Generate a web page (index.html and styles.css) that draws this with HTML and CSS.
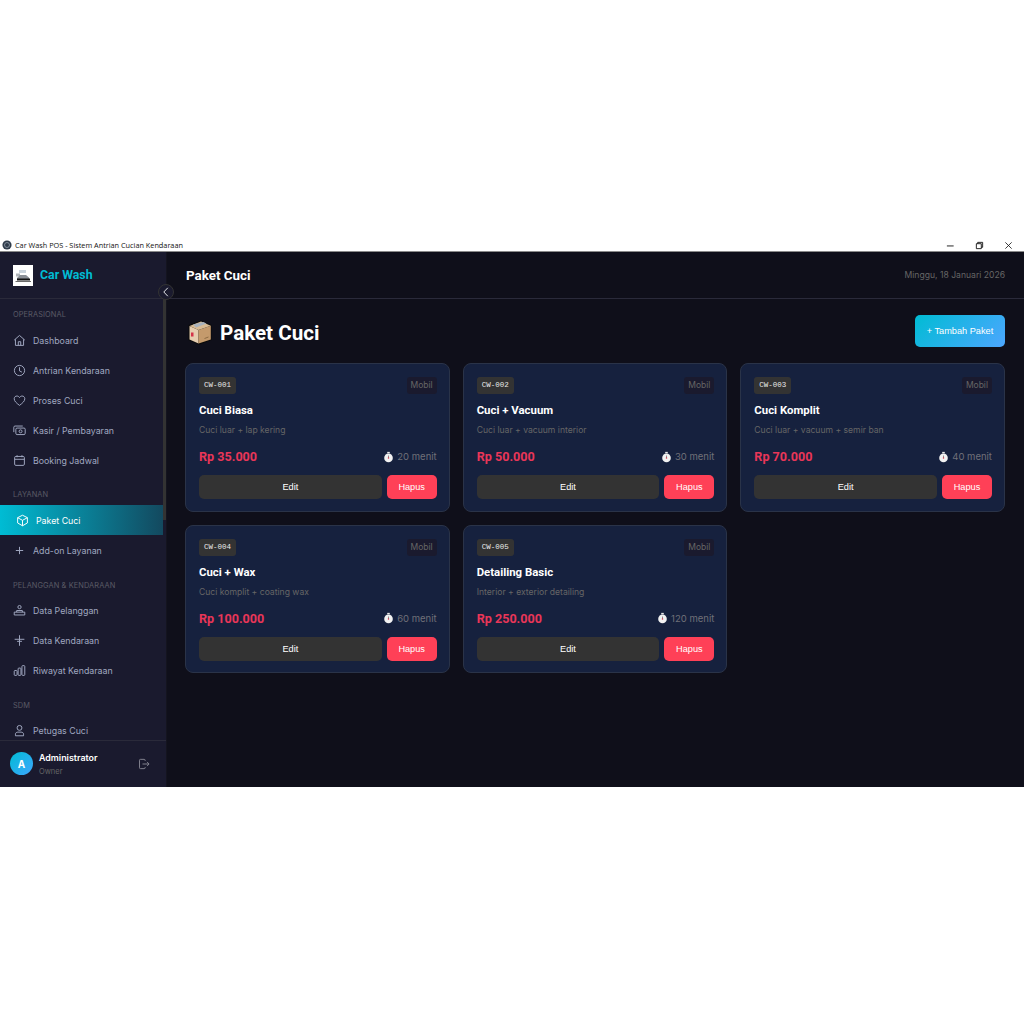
FILE: index.html
```html
<!DOCTYPE html>
<html lang="id">
<head>
  <meta charset="UTF-8">
  <title>Car Wash POS - Sistem Antrian Cucian Kendaraan</title>
  <link rel="stylesheet" href="styles.css">
</head>
<body>
  <svg class="sprites" width="0" height="0">
    <symbol id="i-box" viewBox="0 0 24 25">
      <path d="M0.5 5 L13 0.5 L23.5 5 L23.5 20 L11 24.8 L0.5 20 Z" fill="#0a0a0a"/>
      <path d="M1.5 6 L10.5 10 L10.5 23.5 L1.5 19.5 Z" fill="#e6cdb0"/>
      <path d="M10.5 10 L22.8 5.8 L22.8 19.5 L10.5 23.5 Z" fill="#c49a6c"/>
      <path d="M1.5 6 L13 1.5 L22.8 5.8 L10.5 10 Z" fill="#d8bb94"/>
      <path d="M5 4.6 L15.5 1.9 L18.5 3.6 L8 7.6 Z" fill="#a8b2bd"/>
      <rect x="3" y="12.5" width="2.5" height="4" fill="#d4334a"/>
      <path d="M16.5 18.5 L20.5 17" stroke="#8c6a43" stroke-width="1"/>
    </symbol>
    <symbol id="i-timer" viewBox="0 0 12 12">
      <circle cx="6" cy="7" r="4.7" fill="#f2f2f2"/>
      <rect x="4.6" y="0.4" width="2.8" height="1.6" fill="#e8e8e8"/>
      <path d="M6 7 L6 4.4" stroke="#666" stroke-width="0.8"/>
      <circle cx="6" cy="7" r="0.8" fill="#d4334a"/>
    </symbol>
  </svg>

  <div class="window">
    <div class="titlebar">
      <div class="titlebar-left">
        <svg class="app-icon" viewBox="0 0 12 12"><circle cx="6" cy="6" r="5.5" fill="#2f3b4a"/><circle cx="6" cy="6" r="3" fill="none" stroke="#8f9aa6" stroke-width="1"/></svg>
        <span>Car Wash POS - Sistem Antrian Cucian Kendaraan</span>
      </div>
      <div class="window-btns">
        <svg viewBox="0 0 10 10"><path d="M1 5.5H8.5" stroke="#111" stroke-width="1"/></svg>
        <svg viewBox="0 0 10 10"><path d="M1.5 3H7V8.5H1.5Z M3 3V1.5H8.5V7H7" fill="none" stroke="#111" stroke-width="1"/></svg>
        <svg viewBox="0 0 10 10"><path d="M1.5 1.5L8.5 8.5M8.5 1.5L1.5 8.5" stroke="#111" stroke-width="0.9"/></svg>
      </div>
    </div>

    <div class="app">
      <aside class="sidebar">
        <div class="brand">
          <div class="brand-logo">
            <svg viewBox="0 0 20 21"><rect x="6" y="5" width="7" height="3" fill="#c9d3dc"/><rect x="3" y="8.5" width="4" height="3" fill="#b0b5ba"/><path d="M4 13 L7 10 H13 L16 12.5 V14.5 H4 Z" fill="#8a8f96"/><rect x="4" y="13.5" width="13" height="2" fill="#111"/><path d="M2.5 16.5H18" stroke="#444" stroke-width="0.8"/></svg>
          </div>
          <span class="brand-name">Car Wash</span>
        </div>
        <button class="collapse-btn" type="button">
          <svg viewBox="0 0 10 10"><path d="M6.8 0.8L2.8 5L6.8 9.2" fill="none" stroke="#e4e6ea" stroke-width="1"/></svg>
        </button>

        <nav class="nav">
          <div class="nav-label">OPERASIONAL</div>
          <a class="nav-item"><svg viewBox="0 0 16 16"><path d="M1.5 7.5L8 1.8L14.5 7.5M3 6.5V14H13V6.5M6.5 14V9.5H9.5V14"/></svg>Dashboard</a>
          <a class="nav-item"><svg viewBox="0 0 16 16"><circle cx="8" cy="8" r="6.3"/><path d="M8 4V8.5L11 10"/></svg>Antrian Kendaraan</a>
          <a class="nav-item"><svg viewBox="0 0 16 16"><path d="M8 14C4 11 1.5 8.8 1.5 5.8C1.5 3.8 3 2.5 4.8 2.5C6.2 2.5 7.3 3.2 8 4.4C8.7 3.2 9.8 2.5 11.2 2.5C13 2.5 14.5 3.8 14.5 5.8C14.5 8.8 12 11 8 14Z"/></svg>Proses Cuci</a>
          <a class="nav-item"><svg viewBox="0 0 16 16"><rect x="3.5" y="5" width="11.5" height="8" rx="1.5"/><path d="M1 10V4C1 3 1.7 2.5 2.5 2.5H12"/><circle cx="9.3" cy="9" r="1.8"/></svg>Kasir / Pembayaran</a>
          <a class="nav-item"><svg viewBox="0 0 16 16"><rect x="2" y="3" width="12" height="11" rx="1.5"/><path d="M2 6.5H14M5 1.5V4M11 1.5V4"/></svg>Booking Jadwal</a>

          <div class="nav-label">LAYANAN</div>
          <a class="nav-item active"><svg viewBox="0 0 16 16"><path d="M8 1.5L14 4.5V11L8 14.5L2 11V4.5ZM2 4.5L8 7.8L14 4.5M8 7.8V14.5"/></svg>Paket Cuci</a>
          <a class="nav-item"><svg viewBox="0 0 16 16"><path d="M8 3.5V12.5M3.5 8H12.5"/></svg>Add-on Layanan</a>

          <div class="nav-label">PELANGGAN &amp; KENDARAAN</div>
          <a class="nav-item"><svg viewBox="0 0 16 16"><circle cx="8" cy="3.8" r="2"/><path d="M4.5 10V8H11.5V10M1.5 10H14.5V13.5H1.5Z"/></svg>Data Pelanggan</a>
          <a class="nav-item"><svg viewBox="0 0 16 16"><path d="M8 1.5V14.5M2 6.5H14M5 9H11"/></svg>Data Kendaraan</a>
          <a class="nav-item"><svg viewBox="0 0 16 16"><rect x="1.5" y="8" width="3.5" height="6" rx="1"/><rect x="6.3" y="5" width="3.5" height="9" rx="1"/><rect x="11" y="2" width="3.5" height="12" rx="1"/></svg>Riwayat Kendaraan</a>

          <div class="nav-label">SDM</div>
          <a class="nav-item"><svg viewBox="0 0 16 16"><circle cx="8" cy="4.8" r="3"/><path d="M3 14.5V12.5C3 10.8 4.5 10 6 10H10C11.5 10 13 10.8 13 12.5V14.5Z"/></svg>Petugas Cuci</a>
        </nav>
        <div class="scrollbar"></div>

        <div class="user">
          <div class="avatar">A</div>
          <div class="user-info">
            <div class="user-name">Administrator</div>
            <div class="user-role">Owner</div>
          </div>
          <svg class="logout" viewBox="0 0 16 16"><path d="M9.5 4V3C9.5 2.2 9 1.8 8.2 1.8H3.3C2.5 1.8 2 2.2 2 3V13C2 13.8 2.5 14.2 3.3 14.2H8.2C9 14.2 9.5 13.8 9.5 13V12M6 8H14.5M12 5.2L14.8 8L12 10.8"/></svg>
        </div>
      </aside>

      <div class="main">
        <header class="topbar">
          <span class="topbar-title">Paket Cuci</span>
          <span class="topbar-date">Minggu, 18 Januari 2026</span>
        </header>

        <section class="content">
          <div class="page-head">
            <h1 class="page-title"><svg class="box-icon"><use href="#i-box"/></svg>Paket Cuci</h1>
            <button class="btn-add" type="button">+ Tambah Paket</button>
          </div>

          <div class="card-grid">
            <div class="card">
              <div class="card-top"><span class="code">CW-001</span><span class="type">Mobil</span></div>
              <div class="card-name">Cuci Biasa</div>
              <div class="card-desc">Cuci luar + lap kering</div>
              <div class="card-meta"><span class="price">Rp 35.000</span><span class="duration"><svg><use href="#i-timer"/></svg>20 menit</span></div>
              <div class="card-actions"><button class="btn-edit" type="button">Edit</button><button class="btn-del" type="button">Hapus</button></div>
            </div>
            <div class="card">
              <div class="card-top"><span class="code">CW-002</span><span class="type">Mobil</span></div>
              <div class="card-name">Cuci + Vacuum</div>
              <div class="card-desc">Cuci luar + vacuum interior</div>
              <div class="card-meta"><span class="price">Rp 50.000</span><span class="duration"><svg><use href="#i-timer"/></svg>30 menit</span></div>
              <div class="card-actions"><button class="btn-edit" type="button">Edit</button><button class="btn-del" type="button">Hapus</button></div>
            </div>
            <div class="card">
              <div class="card-top"><span class="code">CW-003</span><span class="type">Mobil</span></div>
              <div class="card-name">Cuci Komplit</div>
              <div class="card-desc">Cuci luar + vacuum + semir ban</div>
              <div class="card-meta"><span class="price">Rp 70.000</span><span class="duration"><svg><use href="#i-timer"/></svg>40 menit</span></div>
              <div class="card-actions"><button class="btn-edit" type="button">Edit</button><button class="btn-del" type="button">Hapus</button></div>
            </div>
            <div class="card">
              <div class="card-top"><span class="code">CW-004</span><span class="type">Mobil</span></div>
              <div class="card-name">Cuci + Wax</div>
              <div class="card-desc">Cuci komplit + coating wax</div>
              <div class="card-meta"><span class="price">Rp 100.000</span><span class="duration"><svg><use href="#i-timer"/></svg>60 menit</span></div>
              <div class="card-actions"><button class="btn-edit" type="button">Edit</button><button class="btn-del" type="button">Hapus</button></div>
            </div>
            <div class="card">
              <div class="card-top"><span class="code">CW-005</span><span class="type">Mobil</span></div>
              <div class="card-name">Detailing Basic</div>
              <div class="card-desc">Interior + exterior detailing</div>
              <div class="card-meta"><span class="price">Rp 250.000</span><span class="duration"><svg><use href="#i-timer"/></svg>120 menit</span></div>
              <div class="card-actions"><button class="btn-edit" type="button">Edit</button><button class="btn-del" type="button">Hapus</button></div>
            </div>
          </div>
        </section>
      </div>
    </div>
  </div>
</body>
</html>
```

FILE: styles.css
```css
/* halaman: latar putih, jendela aplikasi di tengah */
html, body {
  margin: 0;
  height: 100%;
  background: #fff;
}

body {
  padding-top: 239px;
  box-sizing: border-box;
  font-family: "Inter", "Liberation Sans", sans-serif;
}

.sprites {
  display: block;
  height: 0;
}

.window {
  height: 548px;
  display: flex;
  flex-direction: column;
}

/* title bar */
.titlebar {
  height: 12px;
  display: flex;
  justify-content: space-between;
  align-items: center;
  background: #fff;
  border-bottom: 1px solid #8a8a8a;
  flex-shrink: 0;
}

.titlebar-left {
  display: flex;
  align-items: center;
  gap: 3px;
  padding-left: 2px;
  font-family: "Open Sans", sans-serif;
  font-size: 7.3px;
  color: #111;
}

.app-icon {
  width: 10px;
  height: 10px;
}

.window-btns {
  display: flex;
  gap: 20px;
  padding-right: 11px;
}

.window-btns svg {
  width: 9px;
  height: 9px;
}

.app {
  flex: 1;
  display: flex;
  min-height: 0;
  background: #0f0f1a;
}

/* sidebar */
.sidebar {
  width: 166px;
  flex-shrink: 0;
  background: #1a1a2e;
  border-right: 1px solid #14141f;
  display: flex;
  flex-direction: column;
  position: relative;
}

.brand {
  height: 46px;
  display: flex;
  align-items: center;
  gap: 7px;
  padding-left: 13px;
  border-bottom: 1px solid #2a2a3a;
  flex-shrink: 0;
}

.brand-logo {
  width: 20px;
  height: 21px;
  background: #fff;
  display: flex;
}

.brand-name {
  font-family: "Roboto", sans-serif;
  font-size: 12.3px;
  font-weight: 700;
  color: #00bcd4;
}

.collapse-btn {
  position: absolute;
  top: 32px;
  left: 158px;
  width: 16px;
  height: 16px;
  padding: 2px;
  box-sizing: border-box;
  border-radius: 50%;
  background: #1a1a2e;
  border: 1px solid #333;
  z-index: 2;
  display: flex;
}

.nav {
  flex: 1;
  min-height: 0;
  overflow: hidden;
  padding-top: 6px;
}

.nav-label {
  font-size: 7.4px;
  color: #5a5a66;
  padding: 5px 13px 0;
  height: 15px;
  letter-spacing: 0.1px;
}

.nav-item + .nav-label {
  margin-top: 10.3px;
}

.nav-item {
  height: 30px;
  display: flex;
  align-items: center;
  gap: 7px;
  padding-left: 13px;
  font-size: 8.8px;
  color: #a0a8c0;
}

.nav-item svg {
  width: 13px;
  height: 13px;
  fill: none;
  stroke: #a0a8c0;
  stroke-width: 1.2;
  flex-shrink: 0;
}

.nav-item.active {
  width: 163px;
  padding-left: 16px;
  box-sizing: border-box;
  color: #fff;
  background: linear-gradient(90deg, #00bcd4, #13495f);
}

.nav-item.active svg {
  stroke: #fff;
}

.scrollbar {
  position: absolute;
  top: 46px;
  right: 0;
  width: 3px;
  height: 222px;
  background: #333;
}

.user {
  height: 45px;
  display: flex;
  align-items: center;
  padding: 0 16px 1px 10px;
  border-top: 1px solid #2a2a3a;
  background: #1a1a2e;
  flex-shrink: 0;
}

.avatar {
  width: 23px;
  height: 23px;
  border-radius: 50%;
  background: linear-gradient(135deg, #00bcd4, #3ea6ff);
  color: #fff;
  font-size: 10px;
  font-weight: 700;
  display: flex;
  align-items: center;
  justify-content: center;
  margin-right: 6px;
}

.user-info {
  flex: 1;
}

.user-name {
  font-size: 8.9px;
  font-weight: 600;
  color: #fff;
}

.user-role {
  font-size: 7.5px;
  color: #666;
  margin-top: 4px;
}

.logout {
  width: 12px;
  height: 12px;
  fill: none;
  stroke: #8a8a96;
  stroke-width: 1.2;
}

/* main */
.main {
  flex: 1;
  min-width: 0;
  display: flex;
  flex-direction: column;
}

.topbar {
  height: 46px;
  display: flex;
  justify-content: space-between;
  align-items: center;
  padding: 0 19px;
  border-bottom: 1px solid #2a2a3a;
  background: #0f0f1a;
}

.topbar-title {
  font-family: "Roboto", sans-serif;
  font-size: 13.4px;
  font-weight: 700;
  color: #fff;
}

.topbar-date {
  font-size: 8.6px;
  color: #666;
}

.content {
  padding: 16px 19px 0 18px;
}

.page-head {
  display: flex;
  justify-content: space-between;
  align-items: center;
  margin-bottom: 16px;
}

.page-title {
  margin: 0;
  padding-top: 3px;
  display: flex;
  align-items: center;
  gap: 8px;
  font-family: "Roboto", sans-serif;
  font-size: 20.6px;
  font-weight: 700;
  color: #fff;
}

.box-icon {
  width: 24px;
  height: 25px;
  margin-left: 3px;
}

.btn-add {
  width: 90px;
  height: 32px;
  border: none;
  border-radius: 5px;
  background: linear-gradient(135deg, #00bcd4, #4da6ff);
  color: #fff;
  font-family: "Liberation Sans", sans-serif;
  font-size: 9.2px;
}

.card-grid {
  display: grid;
  grid-template-columns: repeat(3, 1fr);
  gap: 13px;
}

.card {
  height: 148.5px;
  box-sizing: border-box;
  padding: 13px 12px 13px 13px;
  background: #16213e;
  border: 1px solid #2a3348;
  border-radius: 8px;
}

.card-top {
  display: flex;
  justify-content: space-between;
  align-items: center;
}

.code {
  padding: 0 5px;
  height: 17px;
  line-height: 17px;
  border-radius: 3px;
  background: #333;
  color: #e8e8e8;
  font-family: "Liberation Mono", monospace;
  font-size: 7.5px;
}

.type {
  padding: 0 4px;
  height: 17px;
  line-height: 17px;
  border-radius: 3px;
  background: #1a1a2e;
  color: #666;
  font-size: 8.5px;
}

.card-name {
  margin-top: 9px;
  font-family: "Roboto", sans-serif;
  font-size: 11.4px;
  font-weight: 700;
  color: #fff;
}

.card-desc {
  margin-top: 8px;
  font-size: 8.6px;
  color: #666;
}

.card-meta {
  margin-top: 14px;
  display: flex;
  justify-content: space-between;
  align-items: center;
}

.price {
  font-family: "Roboto", sans-serif;
  font-size: 12.6px;
  font-weight: 700;
  color: #e93658;
}

.duration {
  display: flex;
  align-items: center;
  gap: 3px;
  font-size: 9.5px;
  color: #707078;
}

.duration svg {
  width: 11px;
  height: 12px;
}

.card-actions {
  margin-top: 11px;
  display: flex;
  gap: 5px;
}

.card-actions button {
  height: 24px;
  border: none;
  border-radius: 5px;
  color: #fff;
  font-family: "Liberation Sans", sans-serif;
  font-size: 9.2px;
}

.btn-edit {
  flex: 1;
  background: #333;
}

.btn-del {
  width: 50px;
  background: #ff4057;
}
```
